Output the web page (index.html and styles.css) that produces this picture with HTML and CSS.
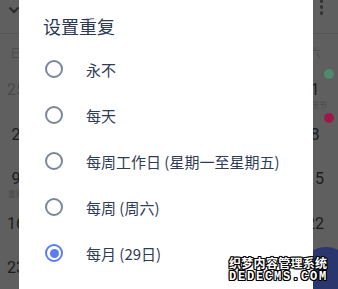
FILE: index.html
```html
<!DOCTYPE html>
<html lang="zh">
<head>
<meta charset="utf-8">
<link rel="stylesheet" href="styles.css">
</head>
<body>
<div class="screen">
  <div class="calendar">
    <div class="topbar">
      <svg class="chev" width="12" height="8" viewBox="0 0 12 8"><path d="M1.5 1.5 L6 6 L10.5 1.5" fill="none" stroke="#2a2a2a" stroke-width="2"/></svg>
      <span class="dots"><i></i><i></i><i></i></span>
    </div>
    <div class="grid">
      <div class="wd">日</div><div class="wd">一</div><div class="wd">二</div><div class="wd">三</div><div class="wd">四</div><div class="wd">五</div><div class="wd">六</div>
      <div class="day other">25</div><div class="day other">26</div><div class="day other">27</div><div class="day other">28</div><div class="day other">29</div><div class="day other">30</div><div class="day"><span class="badge green"></span>1<small>国庆节</small></div>
      <div class="day">2</div><div class="day">3</div><div class="day">4</div><div class="day">5</div><div class="day">6</div><div class="day">7</div><div class="day"><span class="badge red"></span>8</div>
      <div class="day">9<small>重阳</small></div><div class="day">10</div><div class="day">11</div><div class="day">12</div><div class="day">13</div><div class="day">14</div><div class="day">15</div>
      <div class="day">16</div><div class="day">17</div><div class="day">18</div><div class="day">19</div><div class="day">20</div><div class="day">21</div><div class="day">22</div>
      <div class="day">23</div><div class="day">24</div><div class="day">25</div><div class="day">26</div><div class="day">27</div><div class="day">28</div><div class="day">29</div>
    </div>
    <div class="fab"></div>
  </div>

  <div class="dialog">
    <div class="title">设置重复</div>
    <ul class="options">
      <li class="opt"><span class="radio"></span><span class="label">永不</span></li>
      <li class="opt"><span class="radio"></span><span class="label">每天</span></li>
      <li class="opt"><span class="radio"></span><span class="label">每周工作日 (星期一至星期五)</span></li>
      <li class="opt"><span class="radio"></span><span class="label">每周 (周六)</span></li>
      <li class="opt"><span class="radio on"></span><span class="label">每月 (29日)</span></li>
    </ul>
  </div>

  <div class="watermark">
    <div class="wm1">织梦内容管理系统</div>
    <div class="wm2">DEDECMS.COM</div>
  </div>
</div>
</body>
</html>
```
FILE: styles.css
```css
html, body {
  margin: 0;
  padding: 0;
}
body {
  width: 338px;
  height: 289px;
  overflow: hidden;
  font-family: "Noto Sans CJK SC", "Noto Sans", sans-serif;
}
.screen {
  position: relative;
  width: 338px;
  height: 289px;
  overflow: hidden;
  background: #5f5f5f;
}
.calendar {
  position: absolute;
  inset: 0;
}
.topbar {
  height: 33px;
  border-bottom: 1px solid #555;
  display: flex;
  align-items: flex-start;
  justify-content: space-between;
  padding: 0 15px 0 8px;
}
.chev {
  margin-top: 6px;
}
.dots {
  display: flex;
  flex-direction: column;
  gap: 2.5px;
  margin-top: -1px;
}
.dots i {
  width: 3.5px;
  height: 3.5px;
  border-radius: 50%;
  background: #333;
}
.grid {
  width: 349px;
  margin-left: -9px;
  display: grid;
  grid-template-columns: repeat(7, 1fr);
  grid-auto-rows: 44.5px;
  grid-template-rows: 34px;
  padding-top: 2px;
}
.wd {
  text-align: center;
  font-size: 12px;
  color: #4e4e4e;
  line-height: 34px;
}
.day {
  position: relative;
  text-align: center;
  font-family: "Roboto", sans-serif;
  font-size: 16px;
  color: #1c1c1c;
  line-height: 20px;
  padding-top: 10px;
}
.day.other {
  color: #4a4a4a;
}
.day small {
  display: block;
  font-family: "Noto Sans CJK SC", sans-serif;
  font-size: 8px;
  line-height: 10px;
  color: #4a4a4a;
}
.badge {
  position: absolute;
  top: 0;
  right: 6px;
  width: 10px;
  height: 10px;
  border-radius: 50%;
}
.badge.green { background: #4e8a6e; top: -1px; }
.badge.red { background: #a0184a; top: -2px; }
.fab {
  position: absolute;
  left: 298px;
  top: 247px;
  width: 56px;
  height: 56px;
  border-radius: 50%;
  background: #2a376e;
}
.dialog {
  position: absolute;
  left: 19px;
  top: 0;
  width: 294px;
  height: 289px;
  background: #fff;
  padding-top: 14px;
  box-sizing: border-box;
}
.title {
  padding-left: 24px;
  font-size: 18px;
  line-height: 24px;
  color: #2b3954;
}
.options {
  list-style: none;
  margin: 8px 0 0;
  padding: 0;
}
.opt {
  height: 46px;
  display: flex;
  align-items: center;
  padding-left: 26px;
}
.radio {
  width: 18px;
  height: 18px;
  border: 2px solid #7b8698;
  border-radius: 50%;
  box-sizing: border-box;
  display: flex;
  align-items: center;
  justify-content: center;
  flex: none;
}
.radio.on {
  border-color: #5a7df0;
}
.radio.on::after {
  content: "";
  width: 9px;
  height: 9px;
  border-radius: 50%;
  background: #5a7df0;
}
.label {
  margin-left: 23px;
  font-size: 15px;
  color: #2f3c56;
}
.watermark {
  position: absolute;
  left: 229px;
  top: 255px;
  color: #fff;
  text-shadow: 1px 0 #000, -1px 0 #000, 0 1px #000, 0 -1px #000, 1px 1px #000, -1px -1px #000, 1px -1px #000, -1px 1px #000;
}
.wm1 {
  font-size: 12px;
  line-height: 15px;
  font-weight: bold;
  letter-spacing: 0.3px;
}
.wm2 {
  margin-top: 1px;
  font-family: "Liberation Mono", monospace;
  font-size: 12px;
  line-height: 12px;
  font-weight: bold;
  letter-spacing: 1.8px;
}
```
